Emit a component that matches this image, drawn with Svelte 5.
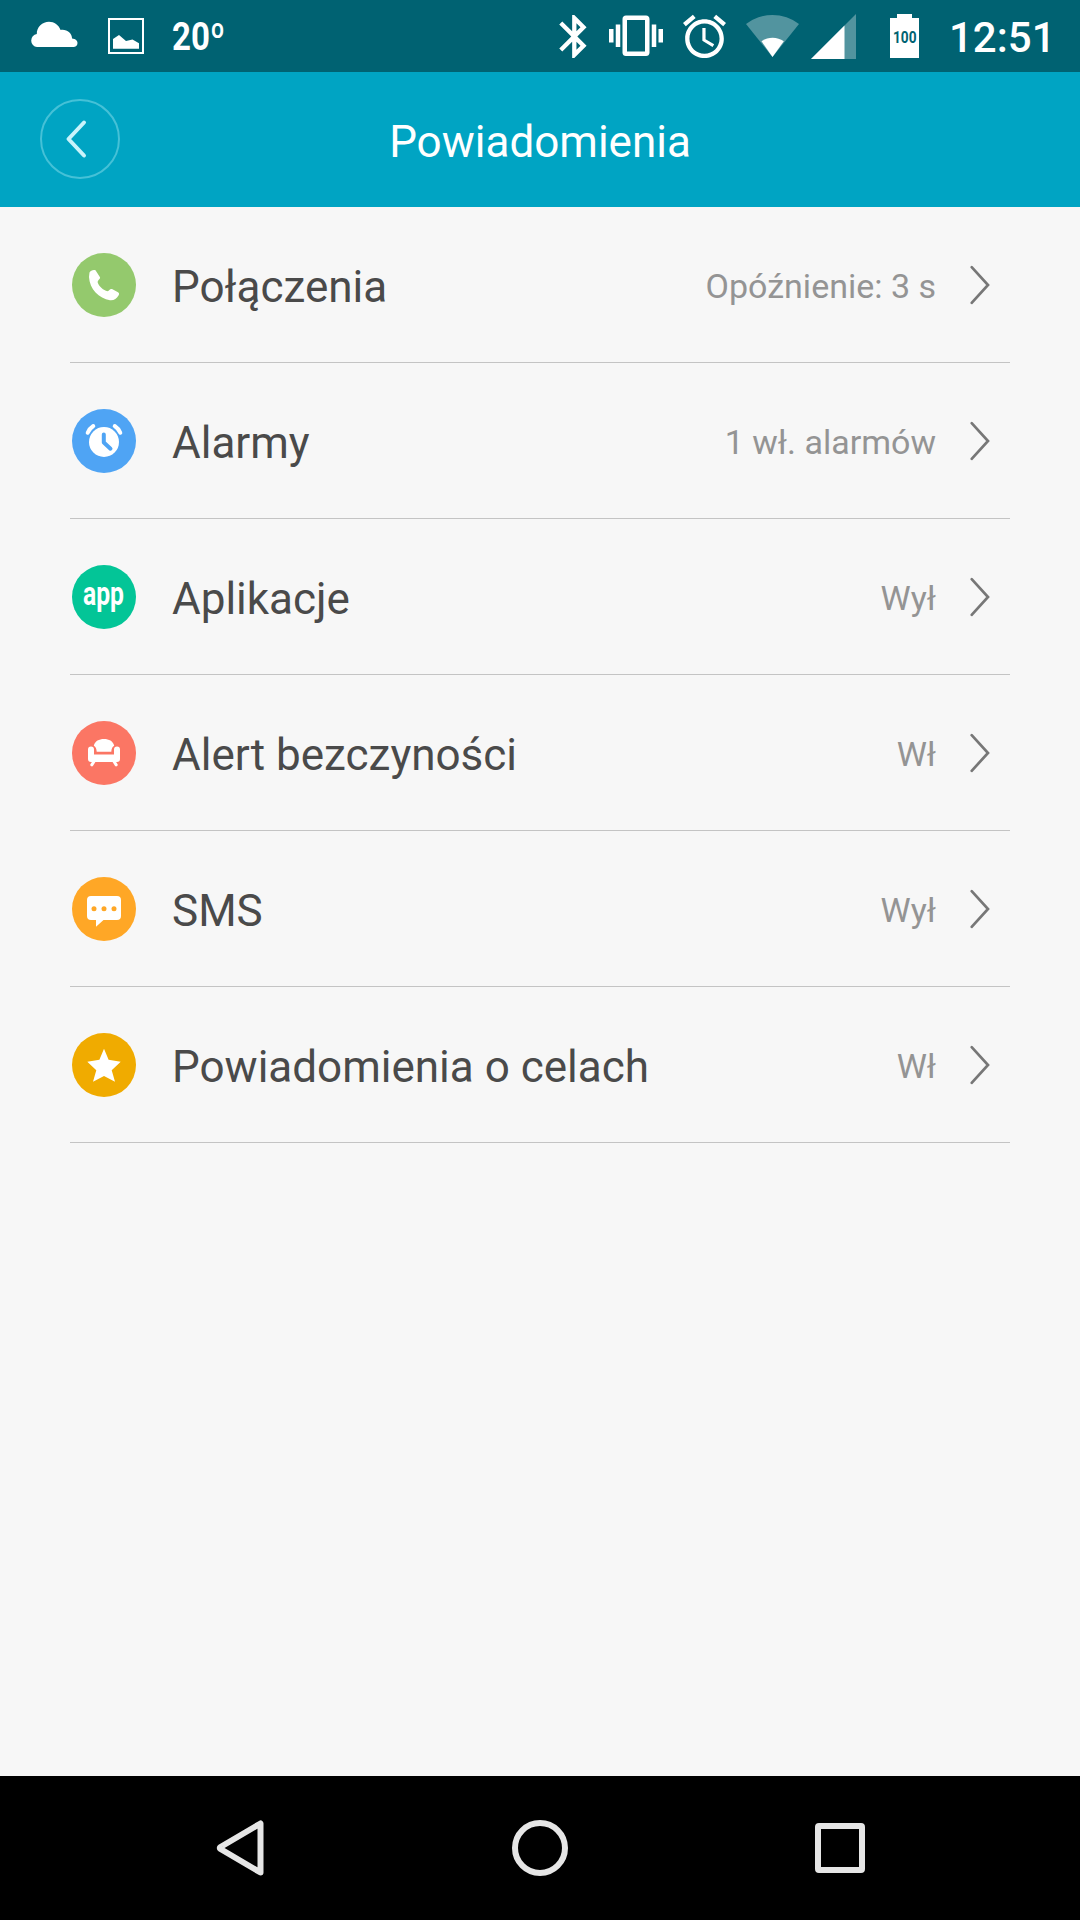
<script>
	const items = [
		{ icon: 'phone', color: '#94c96d', label: 'Połączenia', value: 'Opóźnienie: 3 s' },
		{ icon: 'alarm', color: '#4fa4f4', label: 'Alarmy', value: '1 wł. alarmów' },
		{ icon: 'app', color: '#03c597', label: 'Aplikacje', value: 'Wył' },
		{ icon: 'sofa', color: '#fb7664', label: 'Alert bezczyności', value: 'Wł' },
		{ icon: 'sms', color: '#ffa726', label: 'SMS', value: 'Wył' },
		{ icon: 'star', color: '#f0ab00', label: 'Powiadomienia o celach', value: 'Wł' }
	];
</script>

<div class="screen">
	<div class="status">
		<div class="group left">
			<svg width="48" height="72" fill="#fff">
				<path d="M6 47a6.500 6.500 0 0 1-.2-12.900C5.500 27 11.500 21.700 18 21.700c5.200 0 9.800 3.300 11.600 8.200 6.200-1 11.300 3.100 11.500 8.500 3.200.2 5.400 2 5.400 4.500 0 2.400-1.800 4.100-4.200 4.100z" />
			</svg>
			<svg width="36" height="72">
				<rect x="1" y="19" width="34" height="34" fill="none" stroke="#fff" stroke-width="2" />
				<path d="M5 48.700V39l6-4 7 6 6.500-1.500 6.500 3.700v5.500z" fill="#fff" />
			</svg>
			<svg width="56" height="72" fill="#fff" class="bold">
				<text x="-1" y="50" font-size="38" textLength="53" lengthAdjust="spacingAndGlyphs">20º</text>
			</svg>
		</div>
		<div class="group right">
			<svg class="bt" width="28" height="72" fill="#fff">
				<path transform="translate(-11.500 10.700) scale(2.150)" d="M17.710 7.710L12 2h-1v7.590L6.410 5 5 6.410 10.590 12 5 17.590 6.410 19 11 14.410V22h1l5.710-5.710-4.300-4.290 4.300-4.290zM13 5.830l1.880 1.880L13 9.590V5.830zm1.880 10.460L13 18.170v-3.760l1.880 1.880z" />
			</svg>
			<svg class="vibrate" width="54" height="72" fill="#fff">
				<path transform="translate(0 8.750) scale(2.250)" d="M0 15h2V9H0v6zm3 2h2V7H3v10zm19-8v6h2V9h-2zm-3 8h2V7h-2v10zM16.500 3h-9C6.670 3 6 3.670 6 4.500v15c0 .83.67 1.500 1.500 1.500h9c.83 0 1.500-.67 1.500-1.500v-15c0-.83-.67-1.500-1.500-1.500zM16 19H8V5h8v14z" />
			</svg>
			<svg class="clock-icon" width="43" height="72" fill="#fff">
				<path transform="translate(-4.300 10.700) scale(2.150)" d="M22 5.720l-4.600-3.860-1.290 1.530 4.600 3.860L22 5.720zM7.880 3.390L6.600 1.860 2 5.710l1.290 1.530 4.590-3.850zM12.500 8H11v6l4.750 2.850.75-1.230-4-2.370V8zM12 4c-4.970 0-9 4.030-9 9s4.020 9 9 9c4.970 0 9-4.030 9-9s-4.030-9-9-9zm0 16c-3.870 0-7-3.130-7-7s3.130-7 7-7 7 3.130 7 7-3.130 7-7 7z" />
			</svg>
			<svg class="wifi" width="54" height="72" fill="#fff">
				<path d="M0 24A43.500 43.500 0 0 1 53 24L26.500 57z" opacity=".32" />
				<path d="M15.500 41.300A19 19 0 0 1 37.800 41.300L26.500 57z" />
			</svg>
			<svg class="signal" width="45" height="72" fill="#fff">
				<path d="M0 59L45 14V59z" opacity=".32" />
				<path d="M0 59L33.500 25.500V59z" />
			</svg>
			<svg class="battery" width="29" height="72">
				<path d="M0 18h7v-4h15v4h7v40H0z" fill="#fff" />
				<text class="bold" x="3" y="42.500" font-size="17" fill="#006272" textLength="23.500" lengthAdjust="spacingAndGlyphs">100</text>
			</svg>
			<span class="time">12:51</span>
		</div>
	</div>

	<header>
		<button aria-label="Wstecz">
			<svg width="20" height="38" fill="none" stroke="#c9f3fb" stroke-width="4" stroke-linecap="round" stroke-linejoin="round">
				<path d="M18 2.500L2.500 19 18 35.500" />
			</svg>
		</button>
		<h1>Powiadomienia</h1>
	</header>

	<ul>
		{#each items as item (item.label)}
			<li>
				<svg class="icon" width="64" height="64" viewBox="0 0 64 64" fill="#fff">
					<circle cx="32" cy="32" r="32" fill={item.color} />
					{#if item.icon === 'phone'}
						<path d="M17.500 19.500C18.500 17.500 21.500 16.500 23.500 17.300L28 24.300C28.600 26 25.500 27 25.700 29.500C27 33.500 31.500 37.500 35.500 38.200C37.500 38 37.500 35.500 40 36L46 39.300C47.500 40.200 47.200 41.500 46.500 42.500C44.500 46 42 47.500 38 47.200C27 45.500 17.500 36 17 24Z" />
					{:else if item.icon === 'alarm'}
						<circle cx="32" cy="33" r="15" />
						<g fill="none" stroke-width="4" stroke-linecap="round" stroke-linejoin="round">
							<path d="M31.800 25.500V33.500L38.500 39.700" stroke={item.color} />
							<path d="M15.700 23.800Q17.500 19.500 21.300 17M48.300 23.800Q46.500 19.500 42.700 17" stroke="#fff" />
						</g>
					{:else if item.icon === 'app'}
						<text class="bold" x="11" y="40" font-size="33" textLength="41" lengthAdjust="spacingAndGlyphs">app</text>
					{:else if item.icon === 'sofa'}
						<path d="M21.800 24.700C23 20 27 18 32 18S41 20 42.200 24.700C40.200 26 39.500 27.500 39.300 30.800H24.700C24.500 27.500 23.800 26 21.800 24.700Z" />
						<path d="M16 28.500a3 3 0 0 1 6 0V33.500H42V28.500a3 3 0 0 1 6 0V38a3 3 0 0 1-3 3H19a3 3 0 0 1-3-3z" />
						<path d="M22 40.500L19.800 43.800M42 40.500L44.200 43.800" stroke="#fff" stroke-width="3" stroke-linecap="round" />
					{:else if item.icon === 'sms'}
						<path d="M19 19H45a4 4 0 0 1 4 4V39a4 4 0 0 1-4 4H31.500L24 49.700V43H19a4 4 0 0 1-4-4V23a4 4 0 0 1 4-4z" />
						<g fill={item.color}>
							<circle cx="22" cy="31.700" r="2.500" />
							<circle cx="32" cy="31.700" r="2.500" />
							<circle cx="42" cy="31.700" r="2.500" />
						</g>
					{:else}
						<path d="M32 15.700L36.600 26.800 48.700 28.700 39.700 37.300 43 48.700 32 43 21 48.700 24.300 37.300 15.300 28.700 27.400 26.800z" />
					{/if}
				</svg>
				<span class="label">{item.label}</span>
				<span class="value">{item.value}</span>
				<svg width="20" height="40" fill="none" stroke="#777" stroke-width="2.700" stroke-linecap="round">
					<path d="M1.700 2.200L18 20 1.700 37.800" />
				</svg>
			</li>
		{/each}
	</ul>

	<nav>
		<svg width="56" height="56">
			<path d="M48.500 3.500V52.500L8.500 29Q7 28 8.500 27z" />
		</svg>
		<svg width="56" height="56">
			<circle cx="28" cy="28" r="25" />
		</svg>
		<svg width="56" height="56">
			<rect x="6" y="6" width="44" height="44" rx="1" />
		</svg>
	</nav>
</div>

<style>
	:global(body) {
		margin: 0;
	}

	.screen {
		display: flex;
		flex-direction: column;
		width: 1080px;
		height: 1920px;
		background: #f7f7f7;
		font-family: Roboto, 'Liberation Sans', sans-serif;
		overflow: hidden;
	}

	svg {
		display: block;
		flex: none;
		overflow: visible;
	}

	.bold {
		font-weight: 700;
	}

	.status {
		display: flex;
		justify-content: space-between;
		height: 72px;
		padding: 0 29px 0 31px;
		background: #006272;
	}

	.group {
		display: flex;
	}

	.left {
		gap: 29px;
	}

	.vibrate {
		margin-left: 21px;
	}

	.clock-icon {
		margin-left: 20px;
	}

	.wifi {
		margin-left: 20px;
	}

	.signal {
		margin-left: 11px;
	}

	.battery {
		margin-left: 34px;
	}

	.time {
		width: 102px;
		margin-left: 30px;
		line-height: 75px;
		font-size: 42px;
		font-weight: 500;
		color: #fff;
		white-space: nowrap;
	}

	header {
		display: grid;
		grid-template-columns: 80px 1fr 80px;
		align-items: center;
		height: 135px;
		padding: 0 40px;
		background: #00a4c3;
	}

	button {
		display: flex;
		align-items: center;
		justify-content: center;
		width: 80px;
		height: 80px;
		margin: 0 0 2px;
		padding: 0 8px 0 0;
		box-sizing: border-box;
		border: 2px solid #45c1d7;
		border-radius: 50%;
		background: none;
	}

	h1 {
		margin: 0;
		padding-top: 5px;
		text-align: center;
		font-size: 44px;
		font-weight: 400;
		color: #fff;
	}

	ul {
		flex: 1;
		margin: 0;
		padding: 0 70px;
		list-style: none;
	}

	li {
		display: flex;
		align-items: center;
		height: 155px;
		padding: 0 20px 0 2px;
		border-bottom: 1px solid #c4c4c4;
	}

	.label {
		flex: 1;
		margin-left: 36px;
		padding-top: 5px;
		font-size: 44px;
		color: #4a4a4a;
	}

	.value {
		margin-right: 34px;
		padding-top: 2px;
		font-size: 34px;
		color: #949494;
	}

	nav {
		display: flex;
		justify-content: center;
		gap: 244px;
		height: 144px;
		padding-top: 44px;
		box-sizing: border-box;
		background: #000;
		fill: none;
		stroke: #e6e6e6;
		stroke-width: 6;
		stroke-linejoin: round;
	}
</style>
